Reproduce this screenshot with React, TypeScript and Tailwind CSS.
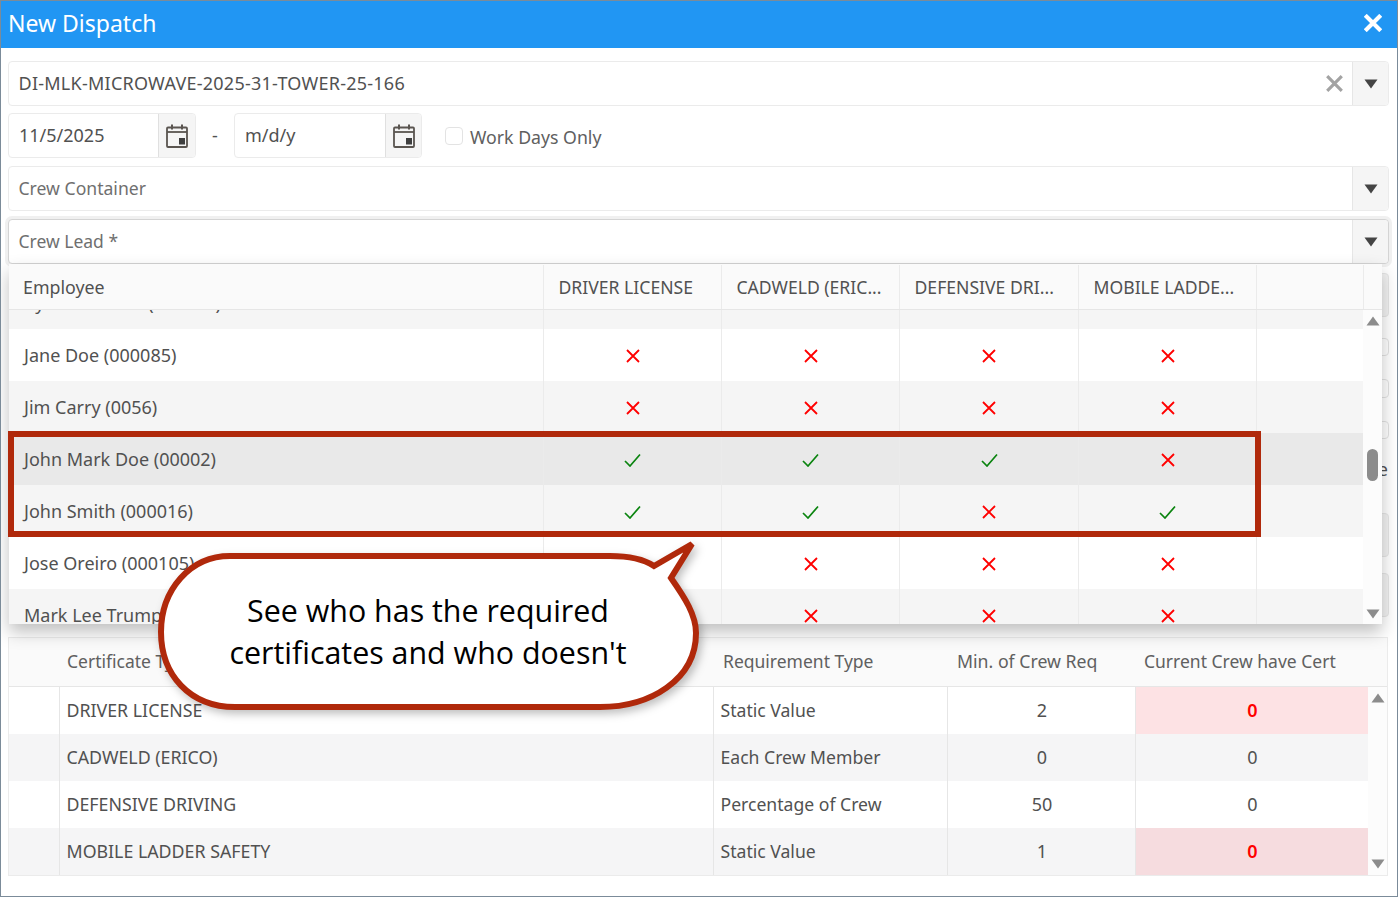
const font = "font-['Noto_Sans','Open_Sans',sans-serif]";

function Tri({ color = '#444444', up }: { color?: string; up?: boolean }) {
  return (
    <svg width="14" height="10" viewBox="0 0 14 10" className="block">
      <path d={up ? 'M7 0.5L13.5 9.5H0.5Z' : 'M0.5 0.5H13.5L7 9.5Z'} fill={color} />
    </svg>
  );
}

function Cal() {
  return (
    <svg width="22" height="24" viewBox="0 0 22 24" className="block">
      <rect x="1" y="3.5" width="20" height="19.5" rx="1" fill="none" stroke="#5a5550" strokeWidth="1.8" />
      <path d="M1 8H21" stroke="#5a5550" strokeWidth="1.8" />
      <path d="M6 0.5V5.5M16 0.5V5.5" stroke="#5a5550" strokeWidth="2" />
      <rect x="13" y="14" width="6" height="6.5" fill="#3f3f3f" />
    </svg>
  );
}

function Cross({ color = '#ff0000', size = 14, w = 1.8 }: { color?: string; size?: number; w?: number }) {
  return (
    <svg width={size} height={size} viewBox="0 0 14 14" className="block">
      <path d="M1 1L13 13M13 1L1 13" stroke={color} strokeWidth={w} fill="none" />
    </svg>
  );
}

function Check() {
  return (
    <svg width="17" height="14" viewBox="0 0 17 14" className="block">
      <path d="M1 8L6 13L16 1.5" stroke="#0a840f" strokeWidth="1.7" fill="none" />
    </svg>
  );
}

function Combo({ label, textClass, clear, focused }: { label: string; textClass: string; clear?: boolean; focused?: boolean }) {
  return (
    <div className={`flex h-[45px] items-stretch rounded border bg-white ${focused ? 'border-[#d4d4d4] shadow-[0_0_0_3px_#f0f0f0]' : 'border-[#ebebeb]'}`}>
      <div className={`flex flex-1 items-center pl-[9.5px] ${textClass}`}>{label}</div>
      {clear && (
        <div className="flex w-[35px] items-center justify-center">
          <Cross color="#a3a3a3" size={17} w={2.6} />
        </div>
      )}
      <div className="flex w-[36px] items-center justify-center rounded-r border-l border-[#e6e6e6] bg-[#f5f5f5]">
        <Tri />
      </div>
    </div>
  );
}

function DateBox({ value, btn }: { value: string; btn: string }) {
  return (
    <div className="flex h-[45px] w-[188px] items-stretch rounded border border-[#ebebeb] bg-white">
      <div className="flex flex-1 items-center pl-[10px] text-[18px] text-[#515151]">{value}</div>
      <div className={`flex ${btn} items-center justify-center rounded-r border-l border-[#e0e0e0] bg-[#f5f5f5]`}>
        <Cal />
      </div>
    </div>
  );
}

const employees: { name: string; c: boolean[]; bg: string }[] = [
  { name: 'Ryan Andrews (000123)', c: [], bg: 'bg-[#f5f5f5]' },
  { name: 'Jane Doe (000085)', c: [false, false, false, false], bg: 'bg-white' },
  { name: 'Jim Carry (0056)', c: [false, false, false, false], bg: 'bg-[#f5f5f5]' },
  { name: 'John Mark Doe (00002)', c: [true, true, true, false], bg: 'bg-[#e9e9e9]' },
  { name: 'John Smith (000016)', c: [true, true, false, true], bg: 'bg-[#f5f5f5]' },
  { name: 'Jose Oreiro (000105)', c: [false, false, false, false], bg: 'bg-white' },
  { name: 'Mark Lee Trump', c: [false, false, false, false], bg: 'bg-[#f5f5f5]' },
];

const certCols = ['w-[178px]', 'w-[178px]', 'w-[179px]', 'w-[178px]'];

function Dropdown() {
  return (
    <div className="absolute left-[8px] top-[263px] z-10 flex h-[360px] w-[1373px] flex-col overflow-hidden bg-white shadow-[0_8px_16px_rgba(0,0,0,0.25)]">
      <div className="flex h-[46px] shrink-0 border-b border-[#e6e6e6] bg-[#fafafa] pt-px text-[17.6px] text-[#515151]">
        <div className="flex w-[535px] items-center border-r border-[#ebebeb] pl-[14px] text-[17.8px]">Employee</div>
        {['DRIVER LICENSE', 'CADWELD (ERIC...', 'DEFENSIVE DRI...', 'MOBILE LADDE...'].map((h, i) => (
          <div key={h} className={`flex ${certCols[i]} items-center border-r border-[#ebebeb] pl-[14.5px] whitespace-nowrap`}>{h}</div>
        ))}
        <div className="w-[107px] border-r border-[#ebebeb]" />
      </div>
      <div className="flex min-h-0 flex-1">
        <div className="min-w-0 flex-1 overflow-hidden">
          <div className="-mt-[33px]">
            {employees.map((e) => (
              <div key={e.name} className={`flex h-[52px] text-[18px] text-[#515151] ${e.bg}`}>
                <div className="flex w-[535px] items-center border-r border-[#ebebeb] pl-[15px]">{e.name}</div>
                {certCols.map((c, i) => (
                  <div key={i} className={`flex ${c} items-center justify-center border-r border-[#ebebeb] pt-px`}>
                    {e.c.length > 0 && (e.c[i] ? <Check /> : <Cross />)}
                  </div>
                ))}
              </div>
            ))}
          </div>
        </div>
        <div className="flex w-[19px] shrink-0 flex-col items-center bg-[#fcfcfc] pt-[6px] pb-[5px]">
          <Tri color="#8c8c8c" up />
          <div className="mt-[123px] mb-auto h-[32px] w-[11px] rounded-full bg-[#8c8c8c]" />
          <Tri color="#8c8c8c" />
        </div>
      </div>
    </div>
  );
}

function HiddenFields() {
  return (
    <div className="flex h-[373px] flex-col items-end text-[18px] text-[#515151]">
      <div className="mt-[9px] h-[44px] w-[40px] shrink-0 rounded-r border border-[#e6e6e6] bg-[#f3f3f3]" />
      <div className="mt-[21px] h-[18px] w-[18px] shrink-0 rounded border border-[#e3e3e3]" />
      <div className="mt-[23px] h-[19px] w-[18px] shrink-0 rounded border border-[#e3e3e3]" />
      <div className="mt-[23px] h-[18px] w-[18px] shrink-0 rounded border border-[#e3e3e3]" />
      <div className="mt-[17px] h-[26px] shrink-0 pr-px leading-[26px]">e</div>
      <div className="mt-[31px] h-[44px] w-[40px] shrink-0 rounded-r border border-[#e6e6e6] bg-[#f3f3f3]" />
      <div className="mt-[16px] h-[44px] w-[40px] shrink-0 rounded-r border border-[#e6e6e6] bg-[#f3f3f3]" />
    </div>
  );
}

const certs = [
  { name: 'DRIVER LICENSE', type: 'Static Value', min: '2', cur: '0', bg: 'bg-white', alert: 'bg-[#fde2e4]', red: true },
  { name: 'CADWELD (ERICO)', type: 'Each Crew Member', min: '0', cur: '0', bg: 'bg-[#f5f5f6]', alert: 'bg-[#f5f5f6]', red: false },
  { name: 'DEFENSIVE DRIVING', type: 'Percentage of Crew', min: '50', cur: '0', bg: 'bg-white', alert: 'bg-white', red: false },
  { name: 'MOBILE LADDER SAFETY', type: 'Static Value', min: '1', cur: '0', bg: 'bg-[#f5f5f6]', alert: 'bg-[#f6dcdf]', red: true },
];

function CertTable() {
  return (
    <div className="mr-px border border-[#ebebeb]">
      <div className="flex h-[49px] border-b border-[#e6e6e6] bg-[#fafafa] pb-[2px] text-[17.5px] text-[#606060]">
        <div className="w-[51px]" />
        <div className="flex w-[654px] items-center pl-[7px]">Certificate Type</div>
        <div className="flex w-[234px] items-center pl-[9px]">Requirement Type</div>
        <div className="flex w-[188px] items-center pl-[9px] text-[17.7px]">Min. of Crew Req</div>
        <div className="flex flex-1 items-center pl-[8px]">Current Crew have Cert</div>
      </div>
      <div className="flex">
        <div className="min-w-0 flex-1">
          {certs.map((c) => (
            <div key={c.name} className={`flex h-[47px] text-[17.6px] text-[#515151] ${c.bg}`}>
              <div className="w-[51px] border-r border-[#e6e6e6]" />
              <div className="flex w-[654px] items-center border-r border-[#e6e6e6] pl-[6.5px] text-[17.8px]">{c.name}</div>
              <div className="flex w-[234px] items-center border-r border-[#e6e6e6] pl-[6.5px]">{c.type}</div>
              <div className="flex w-[188px] items-center justify-center border-r border-[#e6e6e6] pl-px text-[18px]">{c.min}</div>
              <div className={`flex flex-1 items-center justify-center pl-px text-[18px] ${c.alert} ${c.red ? 'font-semibold text-[#ff0000]' : ''}`}>{c.cur}</div>
            </div>
          ))}
        </div>
        <div className="flex w-[19px] shrink-0 flex-col items-center justify-between bg-[#fcfcfc] py-[6px]">
          <Tri color="#8c8c8c" up />
          <Tri color="#8c8c8c" />
        </div>
      </div>
    </div>
  );
}

function Annotation() {
  return (
    <>
      <div className="absolute left-[7px] top-[430px] z-20 h-[106px] w-[1253px] border-[6px] border-[#b0290b]" />
      <svg width="560" height="190" viewBox="0 0 560 190" className="absolute left-[149px] top-[534px] z-20 drop-shadow-[3px_4px_4px_rgba(0,0,0,0.25)]">
        <path
          d="M80 21H460C480 21 495 25 504 31L542 9L521 43C535 63 546 80 546 98C546 145 500 172 450 172H85C40 172 11 140 11 97C11 55 40 21 80 21Z"
          fill="#ffffff"
          stroke="#b0290b"
          strokeWidth="6"
        />
      </svg>
      <div className="absolute left-[177px] top-[589px] z-30 w-[500px] text-center font-['Open_Sans','Noto_Sans',sans-serif] text-[30.4px] leading-[42px] text-black">
        See who has the required
        <br />
        certificates and who doesn't
      </div>
    </>
  );
}

export default function App() {
  return (
    <div className={`relative h-[897px] w-[1398px] overflow-hidden border border-[#7b8b99] bg-white ${font}`}>
      <div className="flex h-[47px] items-center justify-between bg-[#2196f3] pl-[7px] pr-[15px] text-white">
        <span className="pb-[3px] text-[23px]">New Dispatch</span>
        <span className="pb-[4px]">
          <Cross color="#ffffff" size={18} w={3.2} />
        </span>
      </div>
      <div className="flex flex-col pl-[7px] pr-[8px] pt-[13px]">
        <Combo label="DI-MLK-MICROWAVE-2025-31-TOWER-25-166" textClass="text-[18px] tracking-[0.25px] text-[#515151]" clear />
        <div className="mt-[7px] flex items-center">
          <DateBox value="11/5/2025" btn="w-[37px]" />
          <span className="w-[38px] text-center text-[18px] text-[#515151]">-</span>
          <DateBox value="m/d/y" btn="w-[36px]" />
          <div className="ml-[23px] h-[18px] w-[18px] rounded border border-[#e3e3e3]" />
          <span className="ml-[7px] pt-[4px] text-[17.7px] text-[#606060]">Work Days Only</span>
        </div>
        <div className="mt-[8px]">
          <Combo label="Crew Container" textClass="text-[17.6px] text-[#6f6f6f]" />
        </div>
        <div className="mt-[8px]">
          <Combo label="Crew Lead *" textClass="text-[17.5px] text-[#6f6f6f]" focused />
        </div>
        <HiddenFields />
        <CertTable />
      </div>
      <Dropdown />
      <Annotation />
    </div>
  );
}
